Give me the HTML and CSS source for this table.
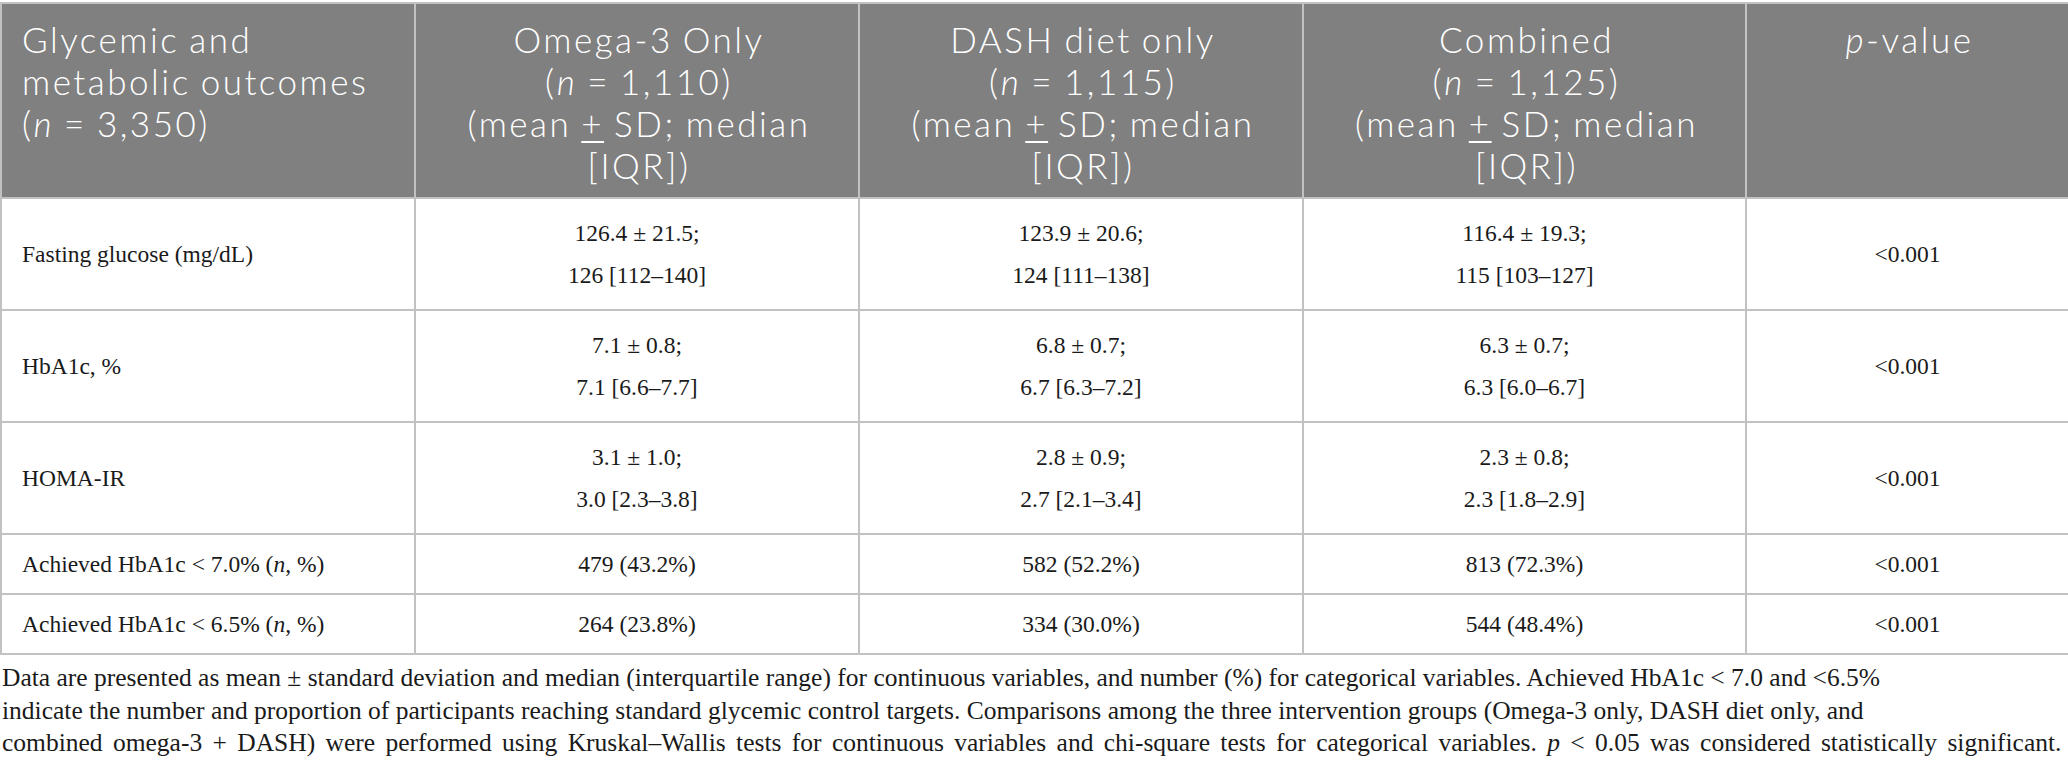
FILE: index.html
```html
<!DOCTYPE html>
<html lang="en">
<head>
<meta charset="utf-8">
<title>Glycemic and metabolic outcomes</title>
<link rel="stylesheet" href="styles.css">
</head>
<body>
<table class="data">
  <colgroup>
    <col class="c1"><col class="c2"><col class="c3"><col class="c4"><col class="c5">
  </colgroup>
  <thead>
    <tr>
      <th class="left">Glycemic and<br>metabolic outcomes<br>(<i>n</i> = 3,350)</th>
      <th>Omega-3 Only<br>(<i>n</i> = 1,110)<br>(mean <u>+</u> SD; median<br>[IQR])</th>
      <th>DASH diet only<br>(<i>n</i> = 1,115)<br>(mean <u>+</u> SD; median<br>[IQR])</th>
      <th>Combined<br>(<i>n</i> = 1,125)<br>(mean <u>+</u> SD; median<br>[IQR])</th>
      <th><i>p</i>-value</th>
    </tr>
  </thead>
  <tbody>
    <tr class="two">
      <td class="left">Fasting glucose (mg/dL)</td>
      <td><span class="ln">126.4 ± 21.5;</span><span class="ln">126 [112–140]</span></td>
      <td><span class="ln">123.9 ± 20.6;</span><span class="ln">124 [111–138]</span></td>
      <td><span class="ln">116.4 ± 19.3;</span><span class="ln">115 [103–127]</span></td>
      <td>&lt;0.001</td>
    </tr>
    <tr class="two">
      <td class="left">HbA1c, %</td>
      <td><span class="ln">7.1 ± 0.8;</span><span class="ln">7.1 [6.6–7.7]</span></td>
      <td><span class="ln">6.8 ± 0.7;</span><span class="ln">6.7 [6.3–7.2]</span></td>
      <td><span class="ln">6.3 ± 0.7;</span><span class="ln">6.3 [6.0–6.7]</span></td>
      <td>&lt;0.001</td>
    </tr>
    <tr class="two">
      <td class="left">HOMA-IR</td>
      <td><span class="ln">3.1 ± 1.0;</span><span class="ln">3.0 [2.3–3.8]</span></td>
      <td><span class="ln">2.8 ± 0.9;</span><span class="ln">2.7 [2.1–3.4]</span></td>
      <td><span class="ln">2.3 ± 0.8;</span><span class="ln">2.3 [1.8–2.9]</span></td>
      <td>&lt;0.001</td>
    </tr>
    <tr>
      <td class="left">Achieved HbA1c &lt; 7.0% (<i>n</i>, %)</td>
      <td>479 (43.2%)</td>
      <td>582 (52.2%)</td>
      <td>813 (72.3%)</td>
      <td>&lt;0.001</td>
    </tr>
    <tr>
      <td class="left">Achieved HbA1c &lt; 6.5% (<i>n</i>, %)</td>
      <td>264 (23.8%)</td>
      <td>334 (30.0%)</td>
      <td>544 (48.4%)</td>
      <td>&lt;0.001</td>
    </tr>
  </tbody>
</table>
<p class="note">
  <span class="nl">Data are presented as mean ± standard deviation and median (interquartile range) for continuous variables, and number (%) for categorical variables. Achieved HbA1c &lt; 7.0 and &lt;6.5%</span>
  <span class="nl">indicate the number and proportion of participants reaching standard glycemic control targets. Comparisons among the three intervention groups (Omega-3 only, DASH diet only, and</span>
  <span class="nl nl-wide">combined omega-3 + DASH) were performed using Kruskal–Wallis tests for continuous variables and chi-square tests for categorical variables. <i>p</i> &lt; 0.05 was considered statistically significant.</span>
</p>
</body>
</html>
```

FILE: styles.css
```css
html, body {
  margin: 0;
  padding: 0;
  background: #ffffff;
}

body {
  width: 2068px;
  font-family: "Liberation Serif", "Times New Roman", serif;
  color: #1a1a1a;
}

.data {
  margin-top: 2px;
  width: 2068px;
  border-collapse: collapse;
  table-layout: fixed;
}

.c1 { width: 414px; }
.c2 { width: 444px; }
.c3 { width: 444px; }
.c4 { width: 443px; }
.c5 { width: 323px; }

.data th,
.data td {
  border: 2px solid #c2c2c2;
}

.data th {
  background: #808080;
  color: #ffffff;
  font-family: Lato, "Open Sans", sans-serif;
  font-weight: 300;
  font-size: 35px;
  letter-spacing: 2.5px;
  word-spacing: -2px;
  line-height: 42px;
  text-align: center;
  vertical-align: top;
  padding: 14px 16px 11px 20px;
  height: 168px;
}

.data th i {
  font-style: italic;
}

.data th u {
  text-decoration: underline;
  text-underline-offset: 4px;
  text-decoration-thickness: 2px;
}

.data td {
  font-size: 23.5px;
  line-height: 34px;
  text-align: center;
  vertical-align: middle;
  padding: 12px 20px;
}

.data .two td {
  padding: 13px 20px;
}

.data .left {
  text-align: left;
}

.ln {
  display: block;
  line-height: 42px;
}

.note {
  margin: 7px 0 0 2px;
  font-size: 25.5px;
  line-height: 32.5px;
  color: #1a1a1a;
}

.nl {
  display: block;
  white-space: nowrap;
}

.nl-wide {
  word-spacing: 4px;
}
```
